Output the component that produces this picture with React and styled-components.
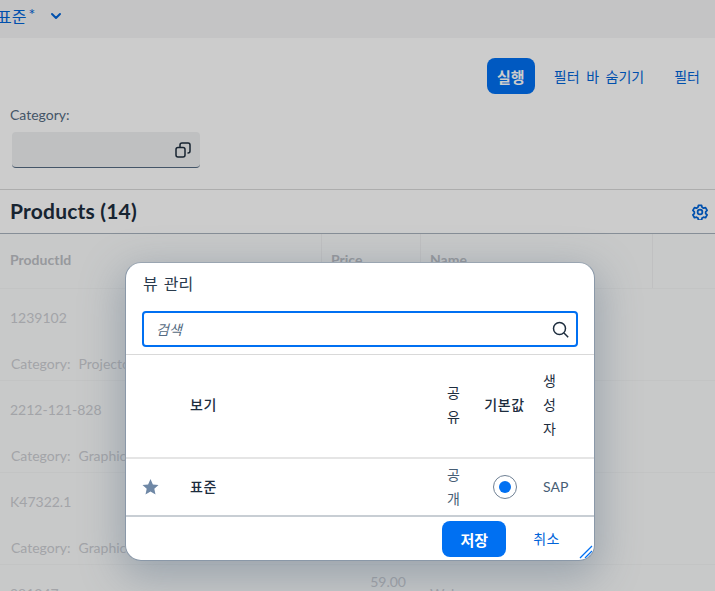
import React from 'react';
import styled, { createGlobalStyle } from 'styled-components';
import { ChevronDown } from 'lucide-react';

const GlobalStyle = createGlobalStyle`
  html, body {
    margin: 0;
    padding: 0;
    background: #fff;
    font-family: Lato, "Noto Sans CJK KR", sans-serif;
    overflow: hidden;
  }
`;

const Page = styled.div`
  position: relative;
  width: 715px;
  height: 591px;
  overflow: hidden;
  color: #1d2d3e;
`;

const HeaderBar = styled.div`
  height: 38px;
  background: #f5f6f7;
  display: flex;
  align-items: center;
  color: #0064d9;
  font-size: 16px;
  margin-left: -3px;
`;

const VariantTitle = styled.span`
  line-height: 20px;
  margin-bottom: 4px;
`;

const Star = styled.sup`
  font-size: 16px;
  line-height: 0;
  margin-left: 2px;
  margin-right: 13px;
  margin-bottom: 10px;
`;

const Chevron = styled(ChevronDown)`
  margin-bottom: 6px;
`;

const FilterBar = styled.div`
  height: 151px;
  background: #fff;
  border-bottom: 1px solid #d9d9d9;
  display: flex;
  flex-direction: column;
`;

const Actions = styled.div`
  display: flex;
  justify-content: flex-end;
  align-items: center;
  padding: 20px 15px 0 0;
  height: 36px;
  gap: 19px;
`;

const GoButton = styled.div`
  width: 48px;
  height: 36px;
  border-radius: 8px;
  background: #0070f2;
  color: #fff;
  font-size: 15px;
  font-weight: 700;
  display: flex;
  align-items: center;
  justify-content: center;
`;

const LinkAction = styled.span`
  color: #0064d9;
  font-size: 14px;
  word-spacing: 3px;
  margin-left: ${(p) => p.$gap || 0}px;
`;

const FieldLabel = styled.div`
  color: #556b82;
  font-size: 14px;
  line-height: 18px;
  margin: 12px 0 0 10px;
`;

const ValueInput = styled.div`
  width: 188px;
  height: 36px;
  margin: 8px 0 0 12px;
  border-radius: 4px;
  background: #eff1f2;
  border-bottom: 1px solid #556b82;
  display: flex;
  align-items: center;
  justify-content: flex-end;
  padding-right: 9px;
  box-sizing: border-box;
  color: #1d2d3e;
`;

const Toolbar = styled.div`
  height: 43px;
  background: #fff;
  border-bottom: 1px solid #a8b2bd;
  display: flex;
  align-items: center;
  justify-content: space-between;
  padding: 0 7px 0 10px;
`;

const ToolbarTitle = styled.h2`
  margin: 0 0 2px;
  font-size: 21px;
  font-weight: 700;
  letter-spacing: 0.2px;
  color: #1d2d3e;
`;

const GearButton = styled.span`
  color: #0064d9;
  display: flex;
  margin-top: 1px;
`;

const Table = styled.div`
  background: #fbfcfc;
`;

const TableRow = styled.div`
  display: grid;
  grid-template-columns: 322px 99px 232px 62px;
  height: ${(p) => p.$height}px;
  border-bottom: 1px solid #f4f5f6;
  box-sizing: border-box;
`;

const HeadCell = styled.div`
  border-right: 1px solid #f0f1f2;
  padding: 0 9px 3px;
  display: flex;
  align-items: center;
  color: #bdc0c5;
  font-size: 14px;
  font-weight: 700;
  &:first-child { padding-left: 10px; }
  &:last-child { border-right: 0; }
`;

const BodyRow = styled.div`
  height: 92px;
  border-bottom: 1px solid #f4f5f6;
  box-sizing: border-box;
`;

const BodyCells = styled.div`
  display: grid;
  grid-template-columns: 322px 99px 232px 62px;
  height: 56px;
  align-items: center;
  font-size: 14px;
  color: #ccced3;
`;

const IdCell = styled.div`
  padding-left: 10px;
`;

const PriceCell = styled.div`
  text-align: right;
  padding-right: 15px;
  transform: translateY(-12px);
`;

const NameCell = styled.div`
  padding-left: 9px;
`;

const PopIn = styled.div`
  font-size: 14px;
  color: #ccced3;
  padding-left: 11px;
  line-height: 18px;
  margin-top: 10px;
  white-space: nowrap;
  & > span { margin-right: 8px; }
`;

const Dim = styled.div`
  position: absolute;
  inset: 0;
  background: rgba(0, 0, 0, 0.2);
`;

const Dialog = styled.div`
  position: absolute;
  left: 125px;
  top: 262px;
  width: 470px;
  height: 299px;
  box-sizing: border-box;
  background: #fff;
  border-radius: 16px;
  border: 1px solid #8a98a8;
  border-top-color: #9aa5b1;
  box-shadow: 0 12px 40px 4px rgba(85, 107, 129, 0.4);
  display: flex;
  flex-direction: column;
  overflow: hidden;
`;

const DialogTitle = styled.div`
  font-size: 16px;
  line-height: 20px;
  word-spacing: 2px;
  padding: 11px 0 0 17px;
  color: #2a3b4d;
`;

const SearchBox = styled.div`
  height: 36px;
  margin: 17px 16px 0;
  border: 2px solid #0070f2;
  border-radius: 4px;
  box-sizing: border-box;
  display: flex;
  align-items: center;
  justify-content: space-between;
  padding: 0 7px 0 12px;
`;

const Placeholder = styled.span`
  font-style: italic;
  font-size: 14px;
  color: #556b82;
`;

const ViewHead = styled.div`
  margin-top: 7px;
  height: 105px;
  padding-bottom: 2px;
  border-top: 1px solid #d9d9d9;
  border-bottom: 2px solid #e5e5e5;
  box-sizing: border-box;
`;

const ViewGrid = styled.div`
  display: grid;
  grid-template-columns: 48px 257px 44px 59px 1fr;
  height: 100%;
  align-items: center;
  font-size: 14px;
  line-height: 24px;
  color: #1d2d3e;
`;

const ViewRow = styled.div`
  height: 58px;
  border-bottom: 2px solid #c8ced4;
  box-sizing: border-box;
`;

const NameText = styled.div`
  padding-left: 16px;
  font-weight: 500;
  letter-spacing: 0.5px;
`;

const Narrow = styled.div`
  width: 16px;
  margin-left: 16px;
  word-break: break-all;
  color: ${(p) => (p.$muted ? '#475e75' : '#1d2d3e')};
`;

const NarrowLast = styled(Narrow)`
  margin-left: 9px;
`;

const Centered = styled.div`
  display: flex;
  justify-content: center;
`;

const DefaultLabel = styled(Centered)`
  font-weight: 500;
  letter-spacing: 0.6px;
`;

const StarCell = styled.div`
  display: flex;
  justify-content: center;
  color: #6f88a6;
`;

const SapText = styled.div`
  padding-left: 9px;
  color: #475e75;
`;

const RadioOuter = styled.div`
  width: 24px;
  height: 24px;
  border-radius: 50%;
  border: 1px solid #6f8094;
  background: #fff;
  box-sizing: border-box;
  display: flex;
  align-items: center;
  justify-content: center;
`;

const RadioDot = styled.div`
  width: 12px;
  height: 12px;
  border-radius: 50%;
  background: #0070f2;
`;

const Footer = styled.div`
  flex: 1;
  display: flex;
  align-items: flex-start;
  justify-content: flex-end;
  padding: 4px 34px 0 0;
  position: relative;
`;

const SaveButton = styled.div`
  width: 64px;
  height: 36px;
  border-radius: 8px;
  background: #0070f2;
  color: #fff;
  font-size: 15px;
  font-weight: 700;
  display: flex;
  align-items: center;
  justify-content: center;
`;

const CancelButton = styled.div`
  color: #0064d9;
  font-size: 14px;
  letter-spacing: 0.5px;
  height: 36px;
  line-height: 36px;
  margin-left: 27px;
`;

const ResizeHandle = styled.svg`
  position: absolute;
  right: 0;
  bottom: 0;
`;

const rows = [
  { id: '1239102', category: 'Projector' },
  { id: '2212-121-828', category: 'Graphic Card' },
  { id: 'K47322.1', category: 'Graphic Card' },
  { id: '981247', price: '59.00', name: 'Webcam', category: 'Accessory' },
];

const GearIcon = () => (
  <svg width="16" height="16" viewBox="0 0 24 24" fill="none" stroke="currentColor" strokeWidth="2.6" strokeLinejoin="round">
    <path d="M9.6 2h4.8l.7 3 2.2 1.3 3-.9 2.4 4.2-2.2 2.1v2.6l2.2 2.1-2.4 4.2-3-.9-2.2 1.3-.7 3H9.6l-.7-3-2.2-1.3-3 .9-2.4-4.2 2.2-2.1v-2.6L1.3 9.6l2.4-4.2 3 .9 2.2-1.3z" />
    <circle cx="12" cy="12" r="3.6" />
  </svg>
);

const CopyIcon = () => (
  <svg width="16" height="16" viewBox="0 0 16 16" fill="none" stroke="currentColor" strokeWidth="1.5">
    <rect x="1" y="5.5" width="9" height="9.5" rx="2" />
    <path d="M5 5V3a2 2 0 0 1 2-2h6a2 2 0 0 1 2 2v6a2 2 0 0 1-2 2h-.5" />
  </svg>
);

const SearchIcon = () => (
  <svg width="17" height="17" viewBox="0 0 17 17" fill="none" stroke="#1d2d3e" strokeWidth="1.5">
    <circle cx="7.5" cy="7.5" r="6" />
    <path d="M12 12l4.2 4.2" />
  </svg>
);

const StarIcon = () => (
  <svg width="17" height="16" viewBox="0 0 17 16" fill="currentColor">
    <path d="M8.5 0l2.4 5.4 5.6.6-4.2 3.8 1.2 5.7-5-2.9-5 2.9 1.2-5.7L.5 6l5.6-.6z" />
  </svg>
);

export default function App() {
  return (
    <Page>
      <GlobalStyle />
      <HeaderBar>
        <VariantTitle>표준</VariantTitle>
        <Star>*</Star>
        <Chevron size={16} strokeWidth={3} />
      </HeaderBar>
      <FilterBar>
        <Actions>
          <GoButton>실행</GoButton>
          <LinkAction>필터 바 숨기기</LinkAction>
          <LinkAction $gap={11}>필터</LinkAction>
        </Actions>
        <FieldLabel>Category:</FieldLabel>
        <ValueInput>
          <CopyIcon />
        </ValueInput>
      </FilterBar>
      <Toolbar>
        <ToolbarTitle>Products (14)</ToolbarTitle>
        <GearButton>
          <GearIcon />
        </GearButton>
      </Toolbar>
      <Table>
        <TableRow $height={55}>
          <HeadCell>ProductId</HeadCell>
          <HeadCell>Price</HeadCell>
          <HeadCell>Name</HeadCell>
          <HeadCell />
        </TableRow>
        {rows.map((row) => (
          <BodyRow key={row.id}>
            <BodyCells>
              <IdCell>{row.id}</IdCell>
              <PriceCell>{row.price}</PriceCell>
              <NameCell>{row.name}</NameCell>
            </BodyCells>
            <PopIn>
              <span>Category:</span>
              {row.category}
            </PopIn>
          </BodyRow>
        ))}
      </Table>
      <Dim />
      <Dialog>
        <DialogTitle>뷰 관리</DialogTitle>
        <SearchBox>
          <Placeholder>검색</Placeholder>
          <SearchIcon />
        </SearchBox>
        <ViewHead>
          <ViewGrid>
            <div />
            <NameText>보기</NameText>
            <Narrow>공유</Narrow>
            <DefaultLabel>기본값</DefaultLabel>
            <NarrowLast>생성자</NarrowLast>
          </ViewGrid>
        </ViewHead>
        <ViewRow>
          <ViewGrid>
            <StarCell>
              <StarIcon />
            </StarCell>
            <NameText>표준</NameText>
            <Narrow $muted>공개</Narrow>
            <Centered>
              <RadioOuter>
                <RadioDot />
              </RadioOuter>
            </Centered>
            <SapText>SAP</SapText>
          </ViewGrid>
        </ViewRow>
        <Footer>
          <SaveButton>저장</SaveButton>
          <CancelButton>취소</CancelButton>
          <ResizeHandle width="16" height="16" viewBox="0 0 16 16" stroke="#0070f2" strokeWidth="1.3">
            <path d="M2 14L14 2M7 14L14 7" />
          </ResizeHandle>
        </Footer>
      </Dialog>
    </Page>
  );
}
